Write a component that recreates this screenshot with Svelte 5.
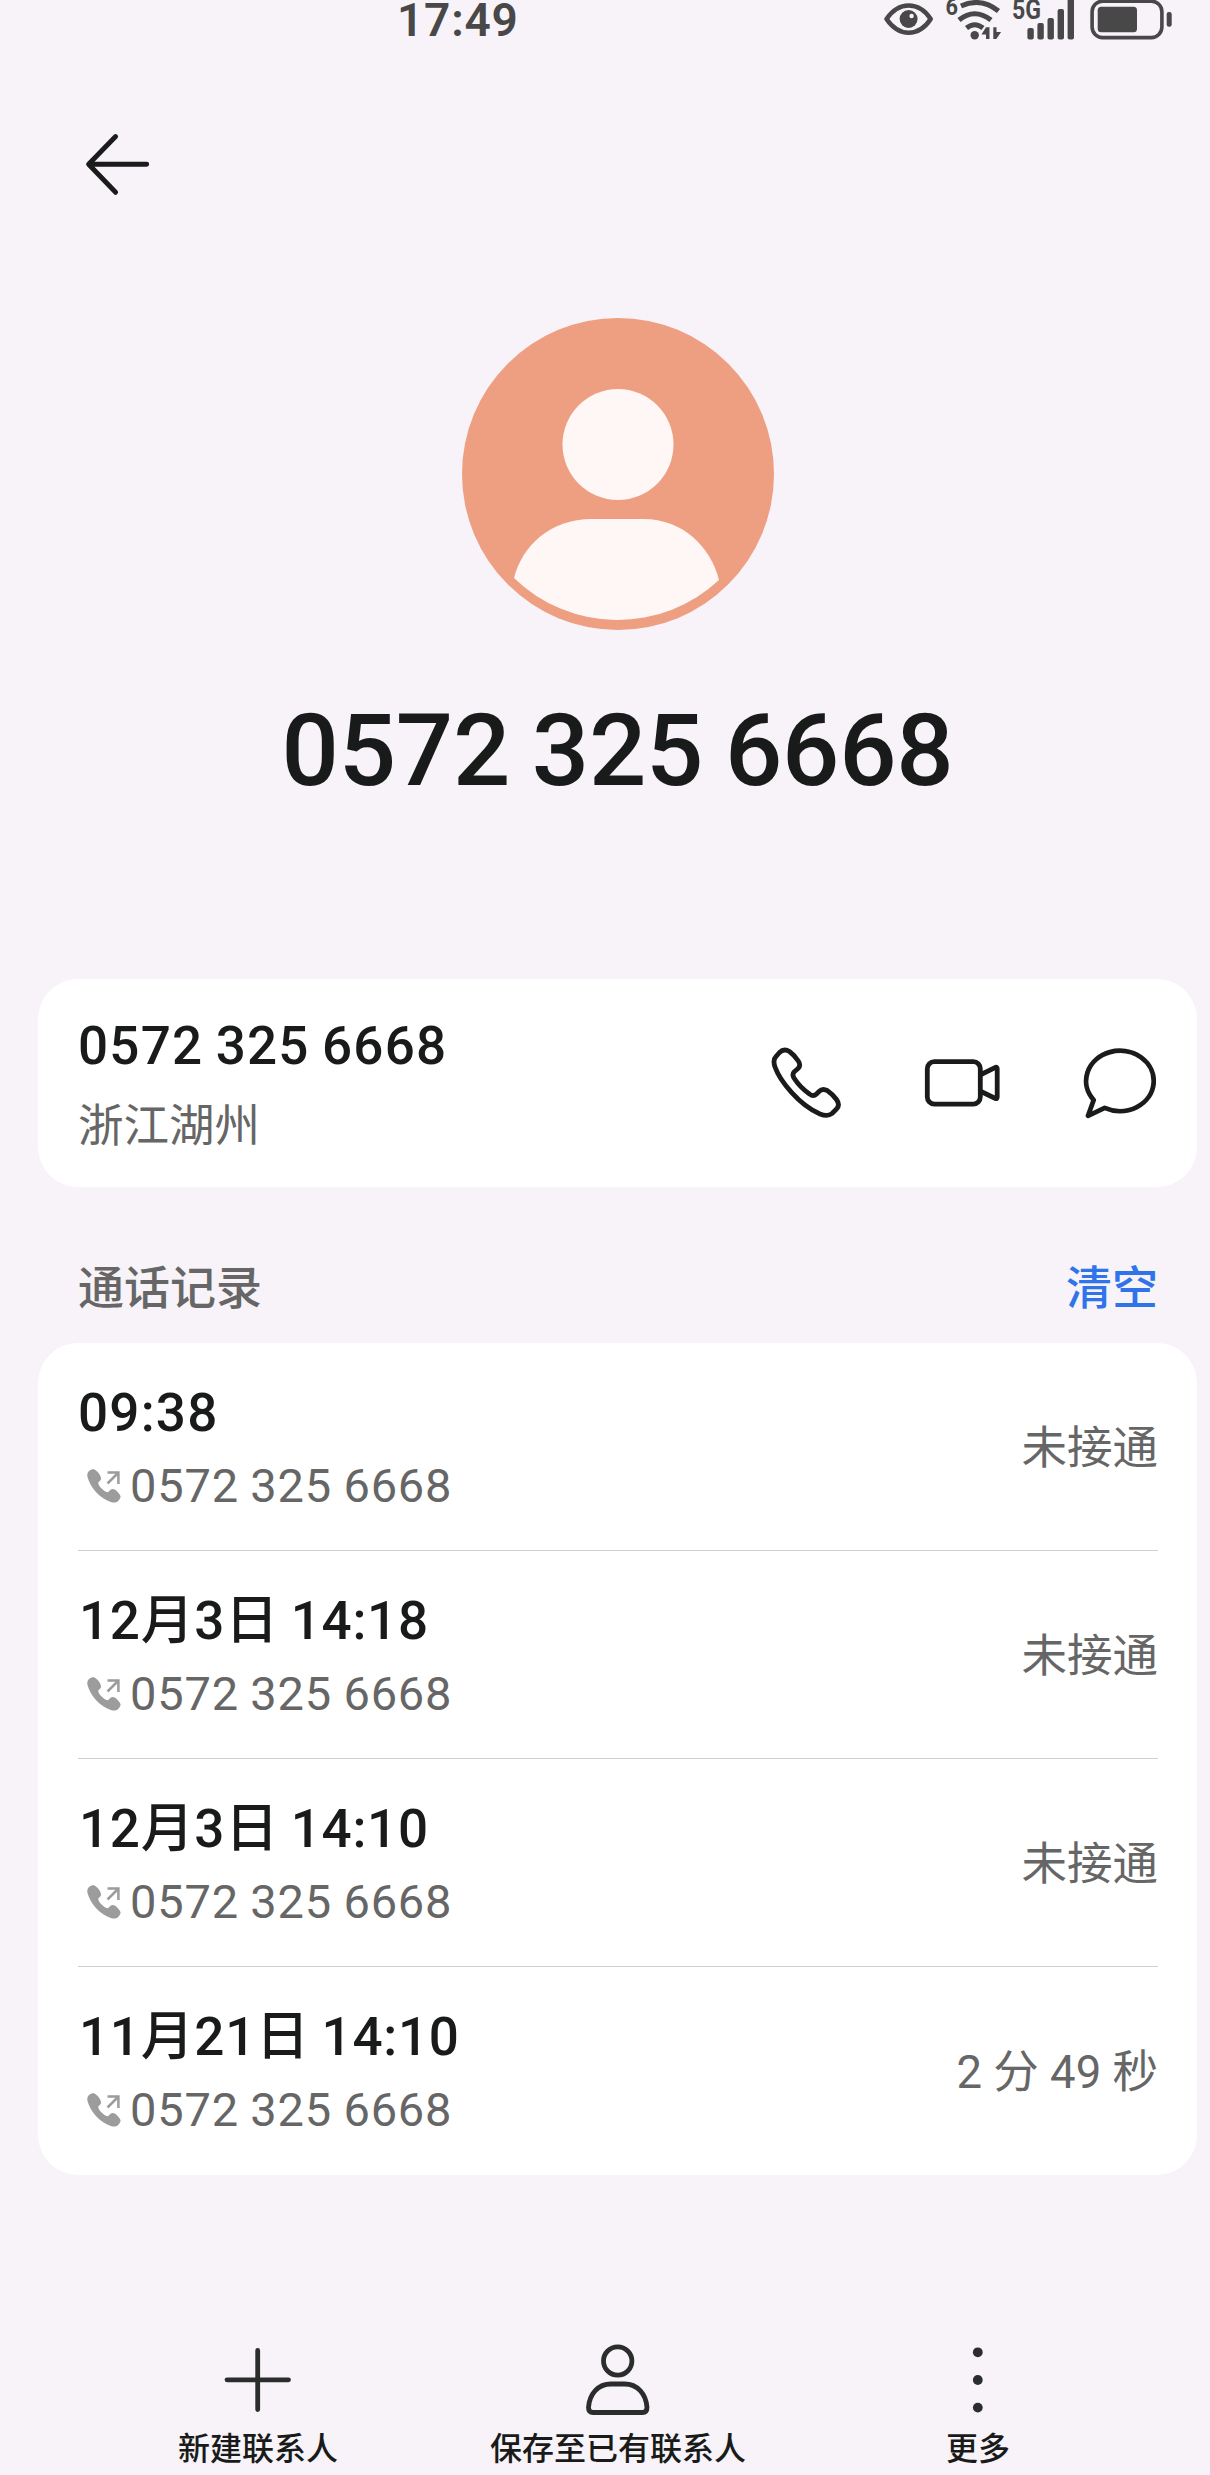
<script>
  const phone = '0572 325 6668';

  const calls = [
    { time: '09:38', status: '未接通' },
    { time: '12月3日 14:18', status: '未接通', dated: true },
    { time: '12月3日 14:10', status: '未接通', dated: true },
    { time: '11月21日 14:10', status: '2 分 49 秒', dated: true },
  ];
</script>

<div class="screen">
  <header class="status-bar">
    <span class="clock">17:49</span>
    <div class="indicators">
      <svg width="52" height="40" viewBox="0 0 52 40">
        <path d="M3.5 19C10 9.5 18 5.5 25.6 5.5S41.5 9.5 47.7 19C41.5 28.5 33 32.7 25.6 32.7S10 28.5 3.5 19z" fill="none" stroke="#484848" stroke-width="4.6" stroke-linejoin="round" />
        <circle cx="25.6" cy="19" r="9" fill="#484848" />
        <circle cx="28.6" cy="16" r="2.2" fill="#f7f3f8" />
      </svg>
      <svg class="wifi" width="58" height="40" viewBox="0 0 58 40">
        <g fill="none" stroke="#484848" stroke-width="5">
          <path d="M16 6Q36 -3 53.5 11" />
          <path d="M14 20Q29.5 7.5 46 20" />
          <path d="M21.5 28Q29.7 21.5 38 28" />
        </g>
        <circle cx="29.7" cy="35.3" r="4.2" fill="#484848" />
        <path d="M41 27.3h3.5V39H41v-4.5h-4.6zM48.3 27.3h3.2V32h4.6L51.3 39h-3z" fill="#484848" />
        <text x="0.5" y="14.8" textLength="12.5" lengthAdjust="spacingAndGlyphs" class="tag small">6</text>
      </svg>
      <svg class="signal" width="66" height="40" viewBox="0 0 66 40">
        <g fill="#484848">
          <rect x="16.4" y="28" width="6.4" height="11.6" rx="2" />
          <rect x="26.4" y="23" width="6.4" height="16.6" rx="2" />
          <rect x="36.5" y="18" width="6.4" height="21.6" rx="2" />
          <rect x="46.6" y="9" width="6.4" height="30.6" rx="2" />
          <rect x="56.6" y="-4" width="6.4" height="43.6" rx="2" />
        </g>
        <text x="1" y="18.6" textLength="29" lengthAdjust="spacingAndGlyphs" class="tag">5G</text>
      </svg>
      <svg class="battery" width="84" height="40" viewBox="0 0 84 40">
        <rect x="3.1" y="1.2" width="69.8" height="36.4" rx="10.5" fill="none" stroke="#484848" stroke-width="3.6" />
        <rect x="8.7" y="6.7" width="39.3" height="25.6" rx="3.5" fill="#484848" />
        <rect x="77.7" y="12" width="5" height="14.7" rx="2.2" fill="#484848" />
      </svg>
    </div>
  </header>

  <div class="toolbar">
    <svg width="72" height="68" viewBox="0 0 72 68" fill="none" stroke="#1a1b1b" stroke-width="4.9" stroke-linecap="round" stroke-linejoin="round">
      <path d="M66.7 34.3H9M35.6 6.5L8.6 34.3L35.6 62.3" />
    </svg>
  </div>

  <section class="profile">
    <svg width="312" height="312" viewBox="0 0 312 312">
      <circle cx="156" cy="156" r="156" fill="#ee9f82" />
      <circle cx="156" cy="126.5" r="55.5" fill="#fff7f5" />
      <path d="M52 260C60 228 88 201 130 201H181C222 201 249 230 257 262A148.6 148.6 0 0 1 52 260z" fill="#fff7f5" />
    </svg>
    <h1>{phone}</h1>
  </section>

  <section class="card contact">
    <div class="contact-text">
      <div class="title">{phone}</div>
      <div class="region">浙江湖州</div>
    </div>
    <div class="actions">
      <svg width="76" height="76" viewBox="0 0 76 76">
        <path d="M11.5 7.5L8 11.5C5.500 14 5.300 17 7 22C12 36 31 60 52 69C57 71 61 71 64 68.500L68.500 64C71 61.500 71 58 68.500 54.500C66 51 63 48 59.500 45.700C56 43.800 53.500 44 51 46.500L48.500 49C46.500 51 44 51 41.500 49C35 44.500 29.500 38.500 26 33C24.500 30.500 24.500 28.500 26.300 26.700L30 23.500C32 21.500 32 18.500 30.300 16C27.500 12 25 9 21.500 6.500C18 4.300 14.500 4.500 11.500 7.500z" />
      </svg>
      <svg width="76" height="76" viewBox="0 0 76 76">
        <rect x="3.3" y="16.7" width="53" height="42.4" rx="7" />
        <path d="M57 29.5L71.5 22.3Q73.2 21.8 73.2 23.8V52Q73.2 54 71.5 53.5L57 46.5" />
      </svg>
      <svg width="76" height="76" viewBox="0 0 76 76">
        <path d="M13.7 55A33.8 30.2 0 1 1 24.7 62.9L8 70.8z" />
      </svg>
    </div>
  </section>

  <div class="section-head">
    <span class="label">通话记录</span>
    <span class="clear">清空</span>
  </div>

  <section class="card log">
    {#each calls as call}
      <div class="row">
        <div class="entry">
          <div class="title" class:dated={call.dated}>{call.time}</div>
          <div class="number">
            <svg width="36" height="36" viewBox="0 0 36 36">
              <path d="M5.7 1.5C2 3 .8 5.5 1.5 9C4 19 14 31 25.5 34.2C28.5 35 31 34.5 33 32C35.2 29.3 35 28 32.5 25C30.500 22.500 28.500 21 26.500 21C24 21 23.500 24.200 21.300 24.200C18 23.500 12.500 18 12.300 15.200C12.300 13 15.300 13 15 10.200C14.800 8 12.500 4 9.700 2.200C8.500 1.300 7 1 5.700 1.500z" fill="#9c9c9c" />
              <path d="M21.5 15.5L32 5M21.5 4.5H32.4V16" fill="none" stroke="#9c9c9c" stroke-width="2.5" />
            </svg>
            <span>{phone}</span>
          </div>
        </div>
        <div class="status">{call.status}</div>
      </div>
    {/each}
  </section>

  <nav>
    <div class="tab">
      <svg width="72" height="72" viewBox="0 0 72 72">
        <path d="M5 35.8H66.500M35.700 6.500V65.500" />
      </svg>
      <span>新建联系人</span>
    </div>
    <div class="tab">
      <svg width="72" height="72" viewBox="0 0 72 72">
        <circle cx="35.7" cy="17" r="14.2" />
        <path d="M6.5 63.5C7.5 50 16 40 29 40H42.5C55.5 40 64 50 65 63.5C65 67 63.5 68.5 60.5 68.5H11C8 68.5 6.5 67 6.5 63.5z" />
      </svg>
      <span>保存至已有联系人</span>
    </div>
    <div class="tab">
      <svg class="dots" width="72" height="72" viewBox="0 0 72 72">
        <circle cx="35.8" cy="8.3" r="4.9" />
        <circle cx="35.8" cy="36" r="4.9" />
        <circle cx="35.8" cy="63.6" r="4.9" />
      </svg>
      <span>更多</span>
    </div>
  </nav>
</div>

<style>
  :global(body) {
    background: #f7f3f8;
  }

  .screen {
    width: 1210px;
    height: 2475px;
    overflow: hidden;
    background: #f7f3f8;
    color: #191b1a;
    font-family: Roboto, 'Noto Sans CJK SC', sans-serif;
  }

  svg {
    display: block;
    flex: none;
  }

  .status-bar {
    display: flex;
    justify-content: space-between;
    height: 130px;
    padding: 0 37px 0 397px;
    box-sizing: border-box;
  }

  .clock {
    font-size: 46px;
    line-height: 40px;
    font-weight: 600;
    letter-spacing: 0.8px;
    color: #484848;
  }

  .indicators {
    display: flex;
  }

  .wifi {
    margin-left: 10px;
  }

  .signal {
    margin-left: 8px;
  }

  .battery {
    margin-left: 12px;
  }

  .tag {
    font-size: 27px;
    font-weight: 700;
    fill: #484848;
  }

  .tag.small {
    font-size: 23px;
  }

  .toolbar {
    height: 188px;
    padding-left: 80px;
  }

  .profile {
    display: flex;
    flex-direction: column;
    align-items: center;
    padding: 0 13px 0 38px;
  }

  h1 {
    margin: 60px 0 168px;
    font-size: 101px;
    line-height: 121px;
    font-weight: 500;
    letter-spacing: -0.3px;
    word-spacing: -3px;
  }

  .card {
    margin: 0 13px 0 38px;
    background: #fff;
    border-radius: 40px;
  }

  .contact {
    display: flex;
    justify-content: space-between;
    align-items: center;
    height: 208px;
    padding: 0 41px 0 40px;
    box-sizing: border-box;
  }

  .contact-text {
    display: flex;
    flex-direction: column;
    gap: 20px;
    height: 136px;
  }

  .title {
    font-size: 53px;
    line-height: 62px;
    font-weight: 500;
    letter-spacing: 1.2px;
    word-spacing: -2px;
    white-space: nowrap;
  }

  .title.dated {
    padding-left: 1px;
    letter-spacing: 0.7px;
  }

  .region {
    font-size: 45.5px;
    line-height: 60px;
    color: #666;
  }

  .actions {
    display: flex;
    gap: 80px;
  }

  .actions svg {
    fill: none;
    stroke: #1a1b1b;
    stroke-width: 4.8;
    stroke-linejoin: round;
    stroke-linecap: round;
  }

  .section-head {
    display: flex;
    justify-content: space-between;
    height: 156px;
    padding: 71px 52px 0 78px;
    box-sizing: border-box;
    font-size: 46px;
    line-height: 60px;
    font-weight: 500;
  }

  .label {
    color: #666;
  }

  .clear {
    color: #2f74ea;
  }

  .log {
    height: 832px;
    padding: 0 39px 0 40px;
    box-sizing: border-box;
  }

  .row {
    display: flex;
    justify-content: space-between;
    height: 208px;
    box-sizing: border-box;
    border-bottom: 1px solid #d0d0d0;
  }

  .row:last-child {
    border-bottom: none;
  }

  .entry {
    display: flex;
    flex-direction: column;
    gap: 14px;
    padding-top: 39px;
  }

  .number {
    display: flex;
    align-items: center;
    gap: 8px;
    height: 56px;
    padding-left: 8px;
    font-size: 47px;
    line-height: 56px;
    letter-spacing: 0.8px;
    word-spacing: -1px;
    color: #666;
  }

  .status {
    padding: 76px 0 0;
    font-size: 45.5px;
    line-height: 60px;
    color: #666;
  }

  nav {
    display: grid;
    grid-template-columns: repeat(3, 360px);
    padding: 169px 0 0 78px;
  }

  .tab {
    display: flex;
    flex-direction: column;
    align-items: center;
    gap: 13px;
    font-size: 32px;
    line-height: 40px;
    font-weight: 500;
  }

  .tab svg {
    fill: none;
    stroke: #2a2d2c;
    stroke-width: 4.8;
    stroke-linecap: round;
  }

  .tab .dots {
    fill: #2a2d2c;
    stroke: none;
  }
</style>
